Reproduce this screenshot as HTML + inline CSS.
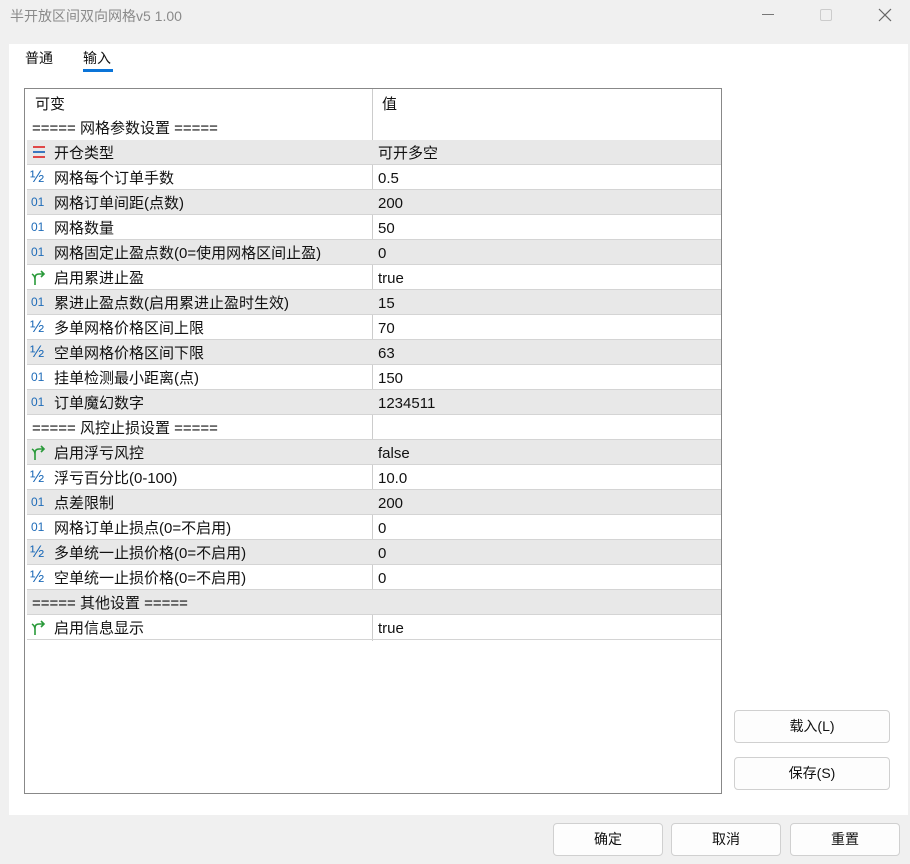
<!DOCTYPE html>
<html><head><meta charset="utf-8"><style>
*{margin:0;padding:0;box-sizing:border-box}
body{width:910px;height:864px;background:#f0f0f0;font-family:"Liberation Sans","Noto Sans CJK SC",sans-serif;font-size:15px;color:#111;position:relative;overflow:hidden}
.abs{position:absolute}
.title{left:10px;top:6px;color:#8a8a8a;font-size:14px}
.panel{left:9px;top:44px;width:899px;height:771px;background:#fff}
.tab{top:48px;font-size:14px}
.table{left:24px;top:88px;width:698px;height:706px;border:1px solid #888;background:#fff}
.vline{left:347px;top:0;width:1px;height:552px;background:#ccc}
.row{position:absolute;left:2px;width:694px;height:25px;border-bottom:1px solid #d4d4d4;line-height:24px}
.row.g{background:#e8e8e8}
.row .n{position:absolute;left:27px;top:2px;white-space:nowrap}
.row .v{position:absolute;left:351px;top:2px}
.row .ic{position:absolute;left:4px;top:0;font-size:12px;color:#1e6bb8}
.row .h{position:absolute;left:3px;top:0;font-size:17px;color:#1e6bb8}
.btn{background:#fdfdfd;border:1px solid #d0d0d0;border-radius:4px;text-align:center;line-height:31px;font-size:14px}
</style></head><body>
<div class="abs title">半开放区间双向网格v5 1.00</div>
<div class="abs" style="left:762px;top:14px;width:12px;height:1px;background:#777"></div>
<div class="abs" style="left:820px;top:9px;width:12px;height:12px;border:1px solid #ccc;border-radius:2px"></div>
<svg class="abs" style="left:878px;top:8px" width="14" height="14"><path d="M1 1L13 13M13 1L1 13" stroke="#666" stroke-width="1.2"/></svg>
<div class="abs panel"></div>
<div class="abs tab" style="left:25px">普通</div>
<div class="abs tab" style="left:83px">输入</div>
<div class="abs" style="left:83px;top:69px;width:30px;height:3px;background:#0a74d8"></div>
<div class="abs table">
<div class="abs vline"></div>
<div class="abs" style="left:10px;top:4px;line-height:24px">可变</div>
<div class="abs" style="left:357px;top:4px;line-height:24px">值</div>
<div class="abs" style="left:7px;top:28px;line-height:24px;white-space:nowrap">===== 网格参数设置 =====</div>
<div class="row g" style="top:51px"><svg class="abs" style="left:5px;top:5px" width="14" height="14"><path d="M1 2h12M1 7h12M1 12h12" stroke="#e04848" stroke-width="2"/><path d="M1 7h12" stroke="#3a78c0" stroke-width="2"/></svg><span class="n">开仓类型</span><span class="v">可开多空</span></div>
<div class="row" style="top:76px"><span class="h">½</span><span class="n">网格每个订单手数</span><span class="v">0.5</span></div>
<div class="row g" style="top:101px"><span class="ic">01</span><span class="n">网格订单间距(点数)</span><span class="v">200</span></div>
<div class="row" style="top:126px"><span class="ic">01</span><span class="n">网格数量</span><span class="v">50</span></div>
<div class="row g" style="top:151px"><span class="ic">01</span><span class="n">网格固定止盈点数(0=使用网格区间止盈)</span><span class="v">0</span></div>
<div class="row" style="top:176px"><svg class="abs" style="left:4px;top:5px" width="16" height="16"><path d="M4 15V8Q4 4 8 4H13M10 1L13 4L10 7M4 9Q4 6 1 4" stroke="#2a9a3a" stroke-width="1.6" fill="none"/></svg><span class="n">启用累进止盈</span><span class="v">true</span></div>
<div class="row g" style="top:201px"><span class="ic">01</span><span class="n">累进止盈点数(启用累进止盈时生效)</span><span class="v">15</span></div>
<div class="row" style="top:226px"><span class="h">½</span><span class="n">多单网格价格区间上限</span><span class="v">70</span></div>
<div class="row g" style="top:251px"><span class="h">½</span><span class="n">空单网格价格区间下限</span><span class="v">63</span></div>
<div class="row" style="top:276px"><span class="ic">01</span><span class="n">挂单检测最小距离(点)</span><span class="v">150</span></div>
<div class="row g" style="top:301px"><span class="ic">01</span><span class="n">订单魔幻数字</span><span class="v">1234511</span></div>
<div class="row" style="top:326px"><span class="n" style="left:5px">===== 风控止损设置 =====</span></div>
<div class="row g" style="top:351px"><svg class="abs" style="left:4px;top:5px" width="16" height="16"><path d="M4 15V8Q4 4 8 4H13M10 1L13 4L10 7M4 9Q4 6 1 4" stroke="#2a9a3a" stroke-width="1.6" fill="none"/></svg><span class="n">启用浮亏风控</span><span class="v">false</span></div>
<div class="row" style="top:376px"><span class="h">½</span><span class="n">浮亏百分比(0-100)</span><span class="v">10.0</span></div>
<div class="row g" style="top:401px"><span class="ic">01</span><span class="n">点差限制</span><span class="v">200</span></div>
<div class="row" style="top:426px"><span class="ic">01</span><span class="n">网格订单止损点(0=不启用)</span><span class="v">0</span></div>
<div class="row g" style="top:451px"><span class="h">½</span><span class="n">多单统一止损价格(0=不启用)</span><span class="v">0</span></div>
<div class="row" style="top:476px"><span class="h">½</span><span class="n">空单统一止损价格(0=不启用)</span><span class="v">0</span></div>
<div class="row g" style="top:501px"><span class="n" style="left:5px">===== 其他设置 =====</span></div>
<div class="row" style="top:526px"><svg class="abs" style="left:4px;top:5px" width="16" height="16"><path d="M4 15V8Q4 4 8 4H13M10 1L13 4L10 7M4 9Q4 6 1 4" stroke="#2a9a3a" stroke-width="1.6" fill="none"/></svg><span class="n">启用信息显示</span><span class="v">true</span></div>
</div>
<div class="abs btn" style="left:734px;top:710px;width:156px;height:33px">载入(L)</div>
<div class="abs btn" style="left:734px;top:757px;width:156px;height:33px">保存(S)</div>
<div class="abs btn" style="left:553px;top:823px;width:110px;height:33px">确定</div>
<div class="abs btn" style="left:671px;top:823px;width:110px;height:33px">取消</div>
<div class="abs btn" style="left:790px;top:823px;width:110px;height:33px">重置</div>
</body></html>
